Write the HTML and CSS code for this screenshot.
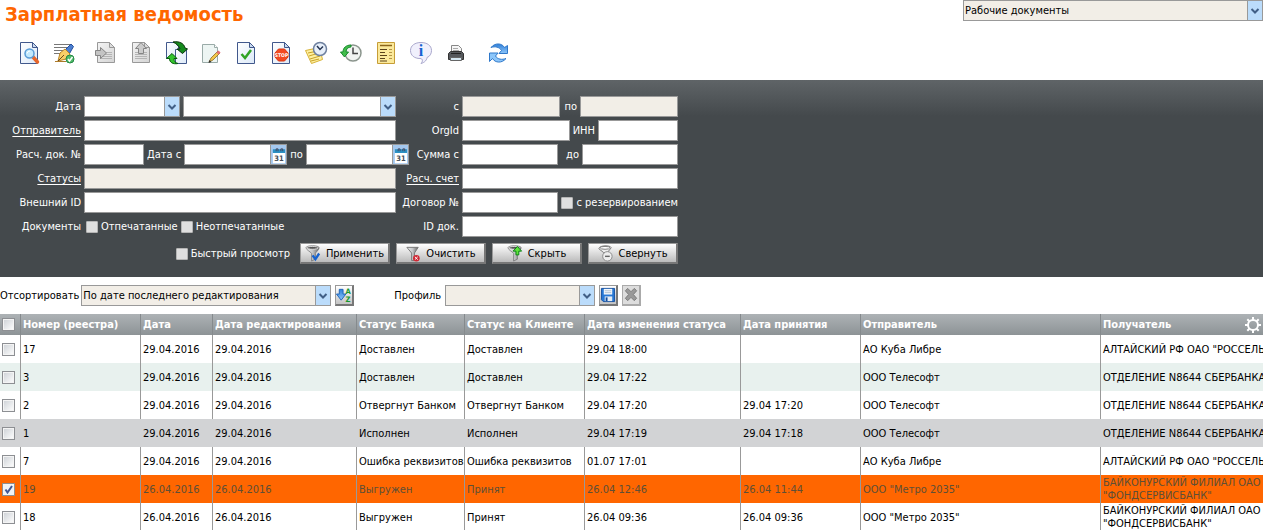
FILE: index.html
```
<!DOCTYPE html>
<html lang="ru">
<head>
<meta charset="utf-8">
<title>Зарплатная ведомость</title>
<link rel="stylesheet" href="styles.css">
</head>
<body>
<svg class="defs" aria-hidden="true">
  <defs>
    <linearGradient id="gPage" x1="0" y1="0" x2="1" y2="1"><stop offset="0" stop-color="#fff"/><stop offset="1" stop-color="#dce9f8"/></linearGradient>
    <linearGradient id="gGrey" x1="0" y1="0" x2="1" y2="1"><stop offset="0" stop-color="#f4f4f4"/><stop offset="1" stop-color="#d4d4d4"/></linearGradient>
    <linearGradient id="gBlue" x1="0" y1="0" x2="0" y2="1"><stop offset="0" stop-color="#2f7fd8"/><stop offset="1" stop-color="#8cc6fa"/></linearGradient>
    <linearGradient id="gMetal" x1="0" y1="0" x2="1" y2="0"><stop offset="0" stop-color="#eee"/><stop offset=".5" stop-color="#c4c6c8"/><stop offset="1" stop-color="#666"/></linearGradient>
    <symbol id="page" viewBox="0 0 24 24"><path d="M3.500 1.500h12l5 5v16h-17z" fill="url(#gPage)" stroke="#41588c"/><path d="M15.500 1.500v5h5z" fill="#c9daf0" stroke="#41588c"/></symbol>
    <symbol id="greypage" viewBox="0 0 24 24"><path d="M3.500 1.500h12l5 5v15h-17z" fill="url(#gGrey)" stroke="#999"/><path d="M15.500 1.500v5h5z" fill="#ddd" stroke="#999"/><path d="M6 11.500h12M6 13.500h12M6 15.500h12M6 17.500h12" stroke="#b4b4b4"/></symbol>
    <symbol id="calendar" viewBox="0 0 16 19"><path d="M0 0h16v19H0z" fill="#a4c8ef"/><path d="M2 7h13v12H2z" fill="#fff"/><path d="M2 4h13v4H2z" fill="#2b91c4"/><path d="M5.500 6V3.500h2V6M10.500 6V3.500h2V6" fill="none" stroke="#43435c"/><text x="8.500" y="16" text-anchor="middle" font-size="8" font-weight="bold" fill="#444b55">31</text></symbol>
    <symbol id="funnel" viewBox="0 0 18 18"><path d="M1 3c0-3 14-3 14 0 0 2-4 5-4 6v6l-4 2V9C7 8 1 5 1 3z" fill="url(#gMetal)" stroke="#666" stroke-width=".7"/><ellipse cx="8" cy="3" rx="6" ry="1.500" fill="#555" stroke="#ddd"/></symbol>
  </defs>
</svg>

<header class="top">
  <h1 class="title">Зарплатная ведомость</h1>
  <select class="select shaded top-select" aria-label="Вид документов"><option>Рабочие документы</option></select>
</header>

<nav class="toolbar" aria-label="Действия">
  <button class="tool" aria-label="Просмотр"><svg viewBox="0 0 24 24"><use href="#page"/><path d="M16 16l4.500 5" stroke="#e8662a" stroke-width="3.500" stroke-linecap="round"/><circle cx="12.500" cy="12.500" r="4.500" fill="#c3e9fd" stroke="#5a9cd6" stroke-width="1.500"/><path d="M10 12.500a3 3 0 0 1 3-2.500" fill="none" stroke="#fff"/></svg></button>
  <button class="tool" aria-label="Подписать"><svg viewBox="0 0 24 24"><path d="M2 3.500h16M2 6.500h13M2 9.500h9M2 12.500h6" stroke="#777"/><path d="M3 20.500h11" stroke="#ad7a2b"/><path d="M13 9l6-6 2.500 2.500-4 7z" fill="#4c7fd0" stroke="#244f9c"/><path d="M6 20l2-8 5-4 5 5-4 5z" fill="#f8cf68" stroke="#b88426"/><path d="M6 20l6-6" stroke="#6b4b1b"/><circle cx="18" cy="18" r="4" fill="#4fba6a" stroke="#238843"/><path d="M16 18l1.500 2 3-4" fill="none" stroke="#fff" stroke-width="1.500"/></svg></button>
  <span class="tool-gap"></span>
  <button class="tool" aria-label="Импорт"><svg viewBox="0 0 24 24"><use href="#greypage"/><path d="M1.500 9.500h5v-3l6 5.500-6 5.500v-3h-5z" fill="#c4c4c4" stroke="#858585"/></svg></button>
  <button class="tool" aria-label="Экспорт"><svg viewBox="0 0 24 24"><use href="#greypage"/><path d="M9.500 12.500v-5h-3l5.500-6 5.500 6h-3v5z" fill="#cbcbcb" stroke="#858585"/></svg></button>
  <button class="tool" aria-label="Обмен"><svg viewBox="0 0 24 24"><path d="M2.500 1.500h9l3 4v12h-12z" fill="url(#gPage)" stroke="#41588c"/><path d="M11.500 8.500h11v14h-11z" fill="url(#gPage)" stroke="#41588c"/><path d="M9 1c6-1 11 1 12 6l2.500 1-5 4.500-5.500-4.500h3c-1-3-3-5-7-7z" fill="#168b1d" stroke="#062f09"/><path d="M2.500 17.500l5.500-5 5 5h-3c0 3 1 4 4 5-5 1-8.500-1-8.500-5z" fill="#34c52e" stroke="#075c0c"/></svg></button>
  <button class="tool" aria-label="Изменить"><svg viewBox="0 0 24 24"><path d="M3.500 3.500h12l3 3v15h-15z" fill="#edf5f3" stroke="#9aaba8"/><path d="M15.500 3.500v3h3" fill="#fff" stroke="#9aaba8"/><path d="M10 21l2-4 7-7 2 2-7 7z" fill="#f3c748" stroke="#8b6b28" stroke-width=".8"/><path d="M18.500 10.500l2 2" stroke="#e56e76" stroke-width="3"/><path d="M9.500 22l1-3 2 2z" fill="#333"/></svg></button>
  <button class="tool" aria-label="Проверить"><svg viewBox="0 0 24 24"><use href="#page"/><path d="M7.500 13l3.500 4 6-8" fill="none" stroke="#31a425" stroke-width="2.500"/></svg></button>
  <button class="tool" aria-label="Остановить"><svg viewBox="0 0 24 24"><use href="#page"/><path d="M9.500 8h6l3.500 4v4l-3.500 4h-6L6 16v-4z" fill="#f34a22" stroke="#d93410"/><text x="12.500" y="16" text-anchor="middle" font-size="5" font-weight="bold" fill="#fff">STOP</text></svg></button>
  <button class="tool" aria-label="Отложить"><svg viewBox="0 0 24 24"><path d="M1.500 9.500l14-3 3 12-11 4z" fill="#fff0a0" stroke="#d7b238"/><path d="M4 12l10-2M5 15l10-3M6 18l10-3M7 20l8-2" stroke="#c7a127"/><circle cx="16" cy="8" r="6.500" fill="#e7effa" stroke="#6f819f" stroke-width="1.500"/><path d="M13 5l3 3.500 3-3" fill="none" stroke="#263552" stroke-width="1.500"/></svg></button>
  <button class="tool" aria-label="История"><svg viewBox="0 0 24 24"><circle cx="14" cy="12" r="8" fill="#f1f3f1" stroke="#8b958d" stroke-width="1.500"/><path d="M14 6.500V12.500h5" fill="none" stroke="#444" stroke-width="1.500"/><path d="M12 4c-5 0-8 3-8 7H1.500l4 5 4-5H7c0-3 2-5 5-5z" fill="#42bd4b" stroke="#178a2c"/></svg></button>
  <button class="tool" aria-label="Журнал"><svg viewBox="0 0 24 24"><path d="M3.500 1.500h17v21h-17z" fill="#fbe99b" stroke="#c69d37"/><path d="M6 4.500h12" stroke="#8c651a" stroke-width="1.500"/><path d="M6 8.500h7M6 11.500h5M6 14.500h7M6 17.500h5M6 20h7" stroke="#5b431b"/><path d="M15 8.500h3M15 11.500h3M15 14.500h3M15 17.500h3" stroke="#b69546"/></svg></button>
  <button class="tool" aria-label="Информация"><svg viewBox="0 0 24 24"><path d="M12 1.500c-6 0-10.500 3-10.500 8s4 8 9.500 8c3 0 3 3 1 5 4-1 6-4 6-6 3-1 4.500-4 4.500-7 0-5-4.500-8-10.500-8z" fill="#f0f0fc" stroke="#a9a7cc"/><text class="serif" x="12" y="15" text-anchor="middle" font-size="16" font-weight="bold" fill="#1763d1">i</text></svg></button>
  <button class="tool" aria-label="Печать"><svg viewBox="0 0 24 24"><path d="M7.500 4.500h7l3 3v4h-10z" fill="#f6f6f6" stroke="#888"/><path d="M9 7.500h5M9 9.500h6" stroke="#aaa"/><path d="M4.500 12.500l2-2h11l2 2v6h-15z" fill="#55585c" stroke="#333"/><path d="M7 12.500h10" stroke="#222"/><path d="M6.500 16.500h11v3h-11z" fill="#d5e8f3" stroke="#666"/></svg></button>
  <span class="tool-gap"></span>
  <button class="tool" aria-label="Обновить"><svg viewBox="0 0 24 24"><path d="M5 6.500C9 1.500 16 2 18.500 6.500L21.500 4.500v8h-8.500l2.500-3C13.500 6 9 5 5 6.500z" fill="url(#gBlue)" stroke="#2f78ca"/><path d="M20 17.500c-4 5-11 4.500-13.500 0L3.500 20.500v-8.500H12l-2.500 3c2 3.500 6.500 4 10.500 2.500z" fill="#8cc6fa" stroke="#2f78ca"/></svg></button>
</nav>

<form class="filter">
  <div class="grid">
    <label class="label" for="period">Дата</label>
    <div class="fields"><select id="period" class="select w96"><option></option></select><select class="select grow" aria-label="Период"><option></option></select></div>
    <label class="label" for="from">с</label>
    <div class="fields"><input id="from" class="input w98" disabled><label class="push" for="to">по</label><input id="to" class="input w98" disabled></div>

    <a class="label link" href="#sender">Отправитель</a>
    <div class="fields"><input id="sender" class="input grow" aria-label="Отправитель"></div>
    <label class="label" for="org">OrgId</label>
    <div class="fields"><input id="org" class="input grow"><label for="inn">ИНН</label><input id="inn" class="input w80"></div>

    <label class="label" for="docno">Расч. док. №</label>
    <div class="fields"><input id="docno" class="input w60"><label for="d1">Дата с</label><span class="date"><input id="d1" class="input"><button type="button" class="cal" aria-label="Календарь"><svg viewBox="0 0 16 19"><use href="#calendar"/></svg></button></span><label for="d2">по</label><span class="date"><input id="d2" class="input"><button type="button" class="cal" aria-label="Календарь"><svg viewBox="0 0 16 19"><use href="#calendar"/></svg></button></span></div>
    <label class="label" for="sum1">Сумма с</label>
    <div class="fields"><input id="sum1" class="input w96"><label class="push" for="sum2">до</label><input id="sum2" class="input w96"></div>

    <a class="label link" href="#statuses">Статусы</a>
    <div class="fields"><input id="statuses" class="input grow" aria-label="Статусы" disabled></div>
    <a class="label link" href="#account">Расч. счет</a>
    <div class="fields"><input id="account" class="input grow" aria-label="Расч. счет"></div>

    <label class="label" for="ext">Внешний ID</label>
    <div class="fields"><input id="ext" class="input grow"></div>
    <label class="label" for="contract">Договор №</label>
    <div class="fields"><input id="contract" class="input w96"><label class="tick push"><input type="checkbox" class="check">с резервированием</label></div>

    <span class="label">Документы</span>
    <div class="fields ticks"><label class="tick"><input type="checkbox" class="check">Отпечатанные</label><label class="tick"><input type="checkbox" class="check">Неотпечатанные</label></div>
    <label class="label" for="docid">ID док.</label>
    <div class="fields"><input id="docid" class="input grow"></div>
  </div>
  <div class="actions">
    <label class="tick quick"><input type="checkbox" class="check">Быстрый просмотр</label>
    <button type="button" class="button"><svg viewBox="0 0 18 18"><use href="#funnel"/><path d="M8 11l3 4 4-6" fill="none" stroke="#1763cf" stroke-width="2.500"/></svg>Применить</button>
    <button type="button" class="button"><svg viewBox="0 0 18 18"><path d="M2 2.500h12l-4 6v8H7v-8z" fill="url(#gMetal)" stroke="#777"/><circle cx="12" cy="14" r="3.500" fill="#cf2733"/><path d="M10.500 12.500l3 3m0-3l-3 3" stroke="#fff"/></svg>Очистить</button>
    <button type="button" class="button"><svg viewBox="0 0 18 18"><use href="#funnel"/><path d="M9.500 10.500v-4h-3l4.500-5 4.500 5h-3v4z" fill="#5ee33b" stroke="#087e14"/></svg>Скрыть</button>
    <button type="button" class="button"><svg viewBox="0 0 18 18"><path d="M2 4c0-4 13-4 13-1l-4 5H7z" fill="#eee" stroke="#777"/><ellipse cx="8.500" cy="3" rx="5" ry="1.500" fill="#fff" stroke="#777"/><circle cx="11" cy="12" r="5" fill="#eee" stroke="#888"/><path d="M8.500 12h5" stroke="#666" stroke-width="1.500"/></svg>Свернуть</button>
  </div>
</form>

<div class="sortbar">
  <label for="sort">Отсортировать</label>
  <select id="sort" class="select shaded sort-select"><option>По дате последнего редактирования</option></select>
  <button class="square" aria-label="Порядок сортировки"><svg viewBox="0 0 17 19"><path d="M3.500 3.500h4v5h3L5.500 15 .5 8.500h3z" fill="url(#gBlue)" stroke="#1c62b8"/><text x="10" y="8" font-size="8" font-weight="bold" fill="#18992e">A</text><text x="10" y="17" font-size="8" font-weight="bold" fill="#18992e">Z</text></svg></button>
  <label class="profile-label" for="profile">Профиль</label>
  <select id="profile" class="select shaded profile-select"><option></option></select>
  <button class="square" aria-label="Сохранить профиль"><svg viewBox="0 0 17 19"><path d="M1.500 2.500h14v14h-12l-2-2z" fill="#2878d5" stroke="#124d9d"/><path d="M4 3h9v6H4z" fill="#f3f8fd"/><path d="M5 5h7M5 7h7" stroke="#b0bfce"/><path d="M5 11h8v5H5z" fill="#e5edf5"/><path d="M6 12h2v4H6z" fill="#124d9d"/></svg></button>
  <button class="square off" aria-label="Удалить профиль" disabled><svg viewBox="0 0 17 19"><path d="M2.500 5L5 2.500l3.500 3.500L12 2.500 14.500 5 11 9l3.500 4-2.500 2.500L8.500 12 5 15.500 2.500 13 6 9z" fill="#999" stroke="#777"/></svg></button>
</div>

<div class="list">
  <table class="table">
    <colgroup><col class="c-check"><col class="c-num"><col class="c-date"><col class="c-edit"><col class="c-bank"><col class="c-client"><col class="c-changed"><col class="c-accepted"><col class="c-sender"><col class="c-receiver"></colgroup>
    <thead><tr><th><input type="checkbox" class="mark" aria-label="Выбрать все"></th><th>Номер (реестра)</th><th>Дата</th><th>Дата редактирования</th><th>Статус Банка</th><th>Статус на Клиенте</th><th>Дата изменения статуса</th><th>Дата принятия</th><th>Отправитель</th><th>Получатель</th></tr></thead>
    <tbody>
      <tr><td><input type="checkbox" class="mark" aria-label="Выбрать 17"></td><td>17</td><td>29.04.2016</td><td>29.04.2016</td><td>Доставлен</td><td>Доставлен</td><td>29.04 18:00</td><td></td><td>АО Куба Либре</td><td>АЛТАЙСКИЙ РФ ОАО "РОССЕЛЬХОЗБАНК"</td></tr>
      <tr class="even"><td><input type="checkbox" class="mark" aria-label="Выбрать 3"></td><td>3</td><td>29.04.2016</td><td>29.04.2016</td><td>Доставлен</td><td>Доставлен</td><td>29.04 17:22</td><td></td><td>ООО Телесофт</td><td>ОТДЕЛЕНИЕ N8644 СБЕРБАНКА</td></tr>
      <tr><td><input type="checkbox" class="mark" aria-label="Выбрать 2"></td><td>2</td><td>29.04.2016</td><td>29.04.2016</td><td>Отвергнут Банком</td><td>Отвергнут Банком</td><td>29.04 17:20</td><td>29.04 17:20</td><td>ООО Телесофт</td><td>ОТДЕЛЕНИЕ N8644 СБЕРБАНКА</td></tr>
      <tr class="hover"><td><input type="checkbox" class="mark" aria-label="Выбрать 1"></td><td>1</td><td>29.04.2016</td><td>29.04.2016</td><td>Исполнен</td><td>Исполнен</td><td>29.04 17:19</td><td>29.04 17:18</td><td>ООО Телесофт</td><td>ОТДЕЛЕНИЕ N8644 СБЕРБАНКА</td></tr>
      <tr><td><input type="checkbox" class="mark" aria-label="Выбрать 7"></td><td>7</td><td>29.04.2016</td><td>29.04.2016</td><td>Ошибка реквизитов</td><td>Ошибка реквизитов</td><td>01.07 17:01</td><td></td><td>АО Куба Либре</td><td>АЛТАЙСКИЙ РФ ОАО "РОССЕЛЬХОЗБАНК"</td></tr>
      <tr class="selected"><td><input type="checkbox" class="mark" aria-label="Выбрать 19" checked></td><td>19</td><td>26.04.2016</td><td>26.04.2016</td><td>Выгружен</td><td>Принят</td><td>26.04 12:46</td><td>26.04 11:44</td><td>ООО "Метро 2035"</td><td>БАЙКОНУРСКИЙ ФИЛИАЛ ОАО<br>"ФОНДСЕРВИСБАНК"</td></tr>
      <tr><td><input type="checkbox" class="mark" aria-label="Выбрать 18"></td><td>18</td><td>26.04.2016</td><td>26.04.2016</td><td>Выгружен</td><td>Принят</td><td>26.04 09:36</td><td>26.04 09:36</td><td>ООО "Метро 2035"</td><td>БАЙКОНУРСКИЙ ФИЛИАЛ ОАО<br>"ФОНДСЕРВИСБАНК"</td></tr>
    </tbody>
  </table>
  <button class="gear" aria-label="Настройки таблицы"><svg viewBox="0 0 18 18"><circle cx="9" cy="9" r="5" fill="none" stroke="#fff" stroke-width="2"/><path d="M9 1v3M9 14v3M1 9h3M14 9h3M3.300 3.300l2 2M12.700 12.700l2 2M3.300 14.700l2-2M12.700 5.300l2-2" stroke="#fff" stroke-width="2"/></svg></button>
</div>
</body>
</html>
```
FILE: styles.css
```
* { box-sizing: border-box; }

html { overflow: hidden; }

body {
  margin: 0;
  background: #fff;
  color: #000;
  font: 11px/13px "DejaVu Sans Condensed", "DejaVu Sans", sans-serif;
}

input, select, button { font: inherit; color: inherit; margin: 0; }
button { padding: 0; }
.defs { position: absolute; width: 0; height: 0; }
.serif { font-family: "Liberation Serif", serif; }

.top {
  display: flex;
  justify-content: space-between;
  align-items: flex-start;
  height: 36px;
}
.title {
  margin: 0;
  padding-left: 5px;
  color: #f60;
  font: bold 20px/28px "DejaVu Sans Condensed", "DejaVu Sans", sans-serif;
}

.select {
  appearance: none;
  height: 21px;
  padding: 0 17px 0 1px;
  border: 1px solid #999;
  border-radius: 0;
  background:
    url("data:image/svg+xml,%3Csvg xmlns='http://www.w3.org/2000/svg' width='15' height='19'%3E%3Cpath d='M0 0h15v19H0z' fill='%23bbdcfb'/%3E%3Cpath d='M.5 0v19' stroke='%23999'/%3E%3Cpath d='M4.500 8l3.500 3.500L11.500 8' fill='none' stroke='%23415f86' stroke-width='2'/%3E%3C/svg%3E") right center no-repeat #fff;
}
.shaded { background-color: #f2eee7; }
.top-select { width: 300px; }

.toolbar {
  display: flex;
  height: 44px;
  padding: 5px 0 0 11px;
}
.tool {
  width: 35px;
  height: 24px;
  border: 0;
  background: none;
}
.tool svg { display: block; width: 24px; height: 24px; margin: 0 auto; }
.tool-gap { width: 7px; }

.filter {
  padding: 16px 0 13px;
  background: linear-gradient(#5f6467, #44494c 36px);
  color: #fff;
}
.grid {
  display: grid;
  grid-template-columns: 81px 312px 60px 216px;
  column-gap: 3px;
  row-gap: 3px;
}
.label {
  align-self: center;
  justify-self: end;
  white-space: nowrap;
  color: #fff;
}
.link { text-decoration: underline; text-underline-offset: 2px; }
.fields { display: flex; align-items: center; gap: 3px; height: 21px; white-space: nowrap; }
.input {
  height: 21px;
  min-width: 0;
  padding: 0 2px;
  border: 1px solid #999;
  border-radius: 0;
  background: #fff;
  color: #000;
}
.input:disabled { background: #f2eee7; }
.grow { flex: 1; min-width: 0; }
.push { margin-left: auto; }
.w60 { width: 60px; flex: none; }
.w80 { width: 80px; flex: none; }
.w96 { width: 96px; flex: none; }
.w98 { width: 98px; flex: none; }
.date { display: flex; flex: none; width: 103px; }
.date .input { flex: 1; border-right: 0; }
.cal { width: 17px; height: 21px; border: 1px solid #999; background: #a4c8ef; }
.cal svg { display: block; width: 15px; height: 19px; }

.tick { display: flex; align-items: center; gap: 3px; }
.ticks { padding-left: 2px; }
.check {
  appearance: none;
  width: 12px;
  height: 12px;
  border: 1px solid #b5b5b5;
  border-radius: 1px;
  background: #dfdfdf;
}
.actions {
  display: flex;
  align-items: center;
  justify-content: flex-end;
  gap: 6px;
  width: 678px;
  padding-top: 6px;
}
.quick { margin-right: 4px; }
.button {
  display: flex;
  align-items: center;
  justify-content: center;
  gap: 4px;
  width: 90px;
  height: 21px;
  border: 1px solid #999;
  border-right: 2px solid #777;
  border-bottom: 2px solid #777;
  background: linear-gradient(#fff, #bbb);
  color: #000;
}
.button svg { width: 17px; height: 17px; }

.sortbar { display: flex; align-items: center; height: 37px; }
.sort-select { width: 250px; margin: 0 4px 0 2px; }
.square {
  width: 19px;
  height: 21px;
  border: 1px solid #999;
  border-right: 2px solid #777;
  border-bottom: 2px solid #777;
  background: linear-gradient(#fff, #c4c4c4);
}
.square svg { display: block; width: 16px; height: 18px; }
.square.off { margin-left: 4px; border-color: #aaa; background: #ddd; }
.profile-label { margin-left: 40px; }
.profile-select { width: 150px; margin: 0 4px; }

.list { position: relative; overflow: hidden; }
.table {
  width: 100%;
  min-width: 1340px;
  table-layout: fixed;
  border-collapse: separate;
  border-spacing: 0;
}
.c-check { width: 20px; }
.c-num { width: 120px; }
.c-date { width: 72px; }
.c-edit { width: 144px; }
.c-bank { width: 108px; }
.c-client { width: 120px; }
.c-changed { width: 156px; }
.c-accepted { width: 120px; }
.c-sender { width: 240px; }
.table th, .table td {
  padding: 0 0 0 2px;
  border-left: 1px solid #999;
  text-align: left;
  vertical-align: middle;
  white-space: nowrap;
}
.table th:first-child, .table td:first-child { border-left: 0; }
.table th {
  height: 21px;
  border-color: #858a8d;
  background: linear-gradient(#adb2b5, #8d9396);
  color: #fff;
}
.table td { height: 28px; }
.even { background: #e8f1ee; }
.hover { background: #d2d3d5; }
.table .hover td { border-color: #d2d3d5; }
.selected { background: #f60; color: #5d4f37; }
.mark {
  appearance: none;
  display: block;
  width: 13px;
  height: 13px;
  border: 1px solid #8d8f93;
  background: linear-gradient(135deg, #ccd0d5, #fff);
  box-shadow: inset 0 0 0 1px #f4f4f4;
}
.mark:checked {
  background: url("data:image/svg+xml,%3Csvg xmlns='http://www.w3.org/2000/svg' width='11' height='11'%3E%3Cpath d='M2.500 5.500l2 3L9 2' fill='none' stroke='%23405594' stroke-width='2'/%3E%3C/svg%3E") center no-repeat #f0f2f6;
}
.gear {
  position: absolute;
  top: 2px;
  right: 1px;
  width: 18px;
  height: 18px;
  border: 0;
  background: none;
}
.gear svg { display: block; width: 18px; height: 18px; }
```
